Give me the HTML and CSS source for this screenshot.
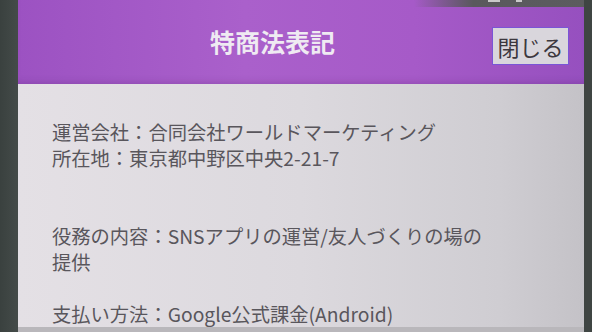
FILE: index.html
```html
<!DOCTYPE html>
<html lang="ja">
<head>
<meta charset="utf-8">
<title>特商法表記</title>
<link rel="stylesheet" href="styles.css">
</head>
<body>
<div class="device">
  <div class="bezel-left"></div>
  <div class="screen">
    <div class="status"><span class="dot"></span><span class="dot short"></span></div>
    <header class="header">
      <h1 class="title">特商法表記</h1>
      <button class="close">閉じる</button>
    </header>
    <main class="content">
      <p class="line">運営会社：合同会社ワールドマーケティング</p>
      <p class="line">所在地：東京都中野区中央2-21-7</p>
      <p class="line blank"></p>
      <p class="line blank"></p>
      <p class="line">役務の内容：SNSアプリの運営/友人づくりの場の<br>提供</p>
      <p class="line blank"></p>
      <p class="line">支払い方法：Google公式課金(Android)</p>
    </main>
    <div class="bottom"><span class="cut">料金：各ページに記載</span></div>
  </div>
  <div class="bezel-right"></div>
</div>
</body>
</html>
```
FILE: styles.css
```css
html, body {
  margin: 0;
  padding: 0;
  width: 592px;
  height: 332px;
  overflow: hidden;
  background: #3e4543;
}
.device {
  display: flex;
  width: 592px;
  height: 332px;
}
.bezel-left {
  width: 18px;
  background: linear-gradient(90deg, #3a413f, #444b49);
}
.bezel-right {
  width: 8px;
  background: #3f4543;
}
.screen {
  flex: 1;
  display: flex;
  flex-direction: column;
  position: relative;
  overflow: hidden;
  font-family: "Noto Sans CJK JP", "Noto Sans", sans-serif;
}
.status {
  position: absolute;
  top: 0;
  right: 0;
  width: 170px;
  height: 7px;
  background: linear-gradient(90deg, rgba(85, 85, 88, 0), #59595c 35%, #5c5c5f 100%);
  display: flex;
  justify-content: flex-end;
  align-items: flex-start;
  gap: 16px;
  padding-right: 62px;
  box-sizing: border-box;
}
.status .dot {
  width: 12px;
  height: 2px;
  background: #c9c9c9;
}
.status .dot.short { width: 6px; }
.header {
  height: 84px;
  flex: none;
  display: flex;
  align-items: center;
  padding-left: 192px;
  padding-right: 15px;
  background: linear-gradient(90deg, #9c52c2 0%, #aa60cb 40%, #a65ac8 70%, #9650bf 100%);
  box-shadow: inset 0 -6px 8px -6px rgba(60, 20, 80, 0.25);
}
.title {
  margin: 0 0 2px 0;
  font-size: 25px;
  font-weight: 700;
  color: #efeaf2;
  line-height: 1;
}
.close {
  margin-left: auto;
  margin-top: 8px;
  width: 77px;
  height: 38px;
  padding: 0;
  background: #d9d6dc;
  border: 1px solid #7a55d6;
  color: #3c383e;
  font-family: "Noto Sans CJK JP", serif;
  font-size: 22px;
  font-weight: 400;
}
.content {
  flex: 1;
  padding: 35px 0 0 34px;
  background: linear-gradient(90deg, #e4e0e5 0%, #dcd9de 50%, #cfcdd2 85%, #c4c2c7 100%);
}
.line {
  margin: 0;
  font-size: 19.3px;
  line-height: 26px;
  color: #59565c;
  white-space: nowrap;
}
.line.blank { height: 26px; }
.bottom {
  height: 10px;
  flex: none;
  background: #b9b7bb;
  overflow: hidden;
  padding-left: 200px;
}
.cut {
  display: block;
  font-size: 19px;
  line-height: 26px;
  margin-top: 2px;
  color: #4a474d;
  white-space: nowrap;
}
```
